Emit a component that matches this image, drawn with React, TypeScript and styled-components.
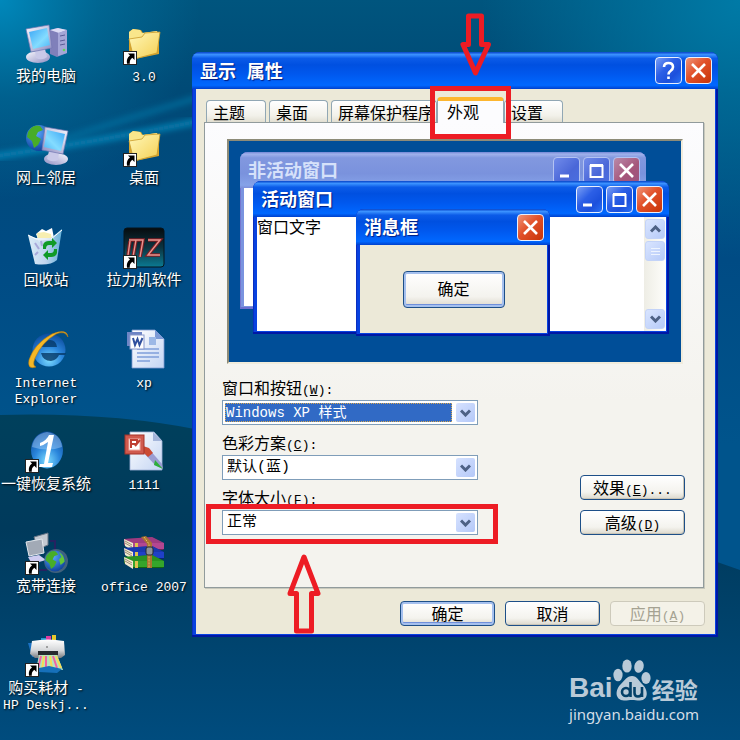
import React, { useState } from "react";
import styled, { createGlobalStyle, css } from "styled-components";

const cjk = `"Noto Sans CJK SC", sans-serif`;
const mono = `"Liberation Mono", "Noto Sans CJK SC", monospace`;

const GlobalStyle = createGlobalStyle`
  *, *::before, *::after { box-sizing: border-box; }
  body { margin: 0; background: #003f66; font-family: ${cjk}; font-size: 16px; }
  button, select { font: inherit; }
`;

/* ---------- Desktop ---------- */

const Desktop = styled.main`
  position: relative;
  min-height: 100vh;
  overflow: hidden;
  isolation: isolate;
`;

const Wallpaper = styled.svg`
  position: absolute;
  inset: 0;
  width: 100%;
  height: 100%;
  z-index: -1;
`;

const Palette = styled.svg`
  display: block;
  width: 0;
  height: 0;
`;

const IconGrid = styled.nav`
  display: grid;
  grid-template-columns: 92px 104px;
  grid-template-rows: repeat(7, 102px);
  grid-auto-flow: column;
  width: max-content;
  padding-top: 23px;
`;

const IconItem = styled.a`
  display: flex;
  flex-direction: column;
  align-items: center;
  gap: 2px;
  color: #fff;
  text-decoration: none;
  font-size: 15px;
  line-height: 16px;
  text-align: center;
  white-space: nowrap;
  text-shadow: 1px 1px 2px #000;
`;

const Glyph = styled.svg`
  width: 42px;
  height: 42px;
  flex: none;
  overflow: visible;
`;

const Latin = styled.span`
  font-family: ${mono};
  font-size: 13px;
  line-height: 0;
`;

/* ---------- Windows ---------- */

type Tone = "active" | "inactive";

const Frame = styled.section<{ $tone?: Tone }>`
  display: flex;
  flex-direction: column;
  border-radius: 8px 8px 0 0;
  background: ${(p) => (p.$tone === "inactive" ? "#7a93df" : "#0842e0")};
  padding: 0 3px 3px 4px;
  box-shadow: inset -2px -2px 0 ${(p) => (p.$tone === "inactive" ? "#6a6fd0" : "#0018a4")},
    inset 1px 0 0 ${(p) => (p.$tone === "inactive" ? "#7376cf" : "#0a2fc0")};
`;

const TitleBar = styled.header<{ $tone?: Tone }>`
  display: flex;
  align-items: center;
  gap: 3px;
  flex: none;
  height: 36px;
  margin: 0 -3px 0 -4px;
  padding: 0 6px 0 8px;
  border-radius: 8px 8px 0 0;
  background: ${(p) =>
    p.$tone === "inactive"
      ? "linear-gradient(#7386d6 0, #a0b2ec 6%, #8298df 16%, #7a92dd 60%, #85a2e8 92%, #7c8fda 100%)"
      : "linear-gradient(#0743c8 0, #3b92ff 7%, #0b5be8 17%, #0050e0 35%, #0058ee 60%, #0068ff 90%, #0040cc 100%)"};
`;

const Title = styled.h2`
  flex: 1;
  margin: 0;
  padding-top: 4px;
  font-family: ${mono};
  font-size: 18px;
  line-height: 24px;
  font-weight: 700;
  white-space: nowrap;
`;

const ActiveTitle = styled(Title)`
  color: #fff;
  text-shadow: 1px 1px 1px #001c80;
`;

const InactiveTitle = styled(Title)`
  color: #d6e1fa;
`;

const CaptionButton = styled.button<{ $kind: "blue" | "red"; $dim?: boolean }>`
  display: grid;
  place-items: center;
  width: 27px;
  height: 27px;
  padding: 0;
  border: 1px solid ${(p) => (p.$dim ? "#b4c3f2" : "#e8effd")};
  border-radius: 4px;
  color: #fff;
  background: ${(p) =>
    p.$kind === "red"
      ? p.$dim
        ? "linear-gradient(135deg, #b98aa8, #a5557a 60%, #9a5580)"
        : "linear-gradient(135deg, #f09478, #e1512a 45%, #c83408)"
      : p.$dim
      ? "linear-gradient(135deg, #718bea, #4a67d8 60%, #4a6ee0)"
      : "linear-gradient(135deg, #7a9ff5, #2c5fe6 40%, #1c50dc 70%, #2870f4)"};
`;

const Mark = styled.svg`
  width: 25px;
  height: 25px;
  fill: none;
  stroke: currentColor;
`;

const DialogWindow = styled(Frame)`
  position: absolute;
  left: 192px;
  right: 22px;
  top: 52px;
`;

const DialogTitleBar = styled(TitleBar)`
  height: 37px;
`;

const DialogBody = styled.div`
  display: flex;
  flex-direction: column;
  background: #ece9d8;
  padding: 8px 11px 8px 8px;
`;

/* ---------- Tabs ---------- */

const TabList = styled.div`
  display: flex;
  align-items: flex-end;
  height: 25px;
  margin-left: 2px;
`;

const Tab = styled.button<{ $width: number; $spaced?: boolean; $active?: boolean }>`
  position: relative;
  flex: none;
  width: ${(p) => p.$width}px;
  height: 22px;
  margin-right: ${(p) => (p.$spaced ? 3 : 0)}px;
  padding: 0 0 0 6px;
  border: 1px solid #91a7b4;
  border-bottom: 0;
  border-radius: 4px 4px 0 0;
  background: linear-gradient(#fff, #f2f1ea 70%, #e2dfd2);
  color: #000;
  line-height: 20px;
  text-align: left;
  white-space: nowrap;
  ${(p) =>
    p.$active &&
    css`
      z-index: 1;
      height: 26px;
      margin-bottom: -1px;
      padding: 0 0 4px 9px;
      border-top: 4px solid #fdb62f;
      background: #fcfcfe;
    `}
`;

const Panel = styled.div`
  display: flex;
  flex-direction: column;
  gap: 14px;
  padding: 16px 18px 52px 17px;
  border: 1px solid #919b9c;
  box-shadow: 1px 1px 0 #c8c8bc;
  background: linear-gradient(#fcfcfe, #f4f3ee 60%);
`;

/* ---------- Preview ---------- */

const Preview = styled.div`
  position: relative;
  height: 225px;
  margin: 0 2px 0 5px;
  border: 2px solid;
  border-color: #8d8b78 #f1ecdc #f1ecdc #8d8b78;
  background: #004e98;
`;

const InactiveSample = styled(Frame)`
  position: absolute;
  inset: 11px 35px 53px 11px;
`;

const ActiveSample = styled(Frame)`
  position: absolute;
  inset: 40px 12px 28px 24px;
`;

const MessageSample = styled(Frame)`
  position: absolute;
  left: 127px;
  right: 131px;
  top: 68px;
  bottom: 26px;
`;

const Page = styled.div`
  display: flex;
  flex: 1;
  background: #fff;
`;

const PageText = styled.p`
  flex: 1;
  margin: 0;
  line-height: 18px;
`;

const MessageBody = styled.div`
  flex: 1;
  display: grid;
  place-items: center;
  background: #ece9d8;
`;

const ScrollTrack = styled.div`
  display: flex;
  flex-direction: column;
  gap: 2px;
  width: 22px;
  padding: 2px 1px;
  background: linear-gradient(90deg, #eeede5, #fefefb);
`;

const ScrollPiece = styled.button<{ $last?: boolean }>`
  display: grid;
  place-items: center;
  height: 20px;
  margin-top: ${(p) => (p.$last ? "auto" : 0)};
  padding: 0;
  border: 1px solid #c3d3f8;
  border-radius: 3px;
  background: linear-gradient(135deg, #d9e5ff, #b6caf8);
  color: #4d6185;
`;

/* ---------- Form ---------- */

const FormArea = styled.form`
  display: flex;
  justify-content: space-between;
  align-items: flex-end;
`;

const Fields = styled.div`
  display: flex;
  flex-direction: column;
  gap: 8px;
  flex: 0 1 256px;
`;

const Field = styled.div`
  display: flex;
  flex-direction: column;
  gap: 4px;
`;

const FieldLabel = styled.label`
  line-height: 18px;
  white-space: nowrap;
`;

const SelectBox = styled.div`
  position: relative;
  height: 25px;
  padding: 2px;
  border: 1px solid #7f9db9;
  background: #fff;
`;

const Select = styled.select<{ $selected?: boolean }>`
  appearance: none;
  display: block;
  width: 100%;
  height: 100%;
  padding: 0 24px 0 2px;
  border: 0;
  outline: 0;
  background: transparent;
  color: #000;
  font-family: ${mono};
  font-size: 15px;
  line-height: 18px;
  ${(p) =>
    p.$selected &&
    css`
      width: calc(100% - 23px);
      padding: 0;
      border: 1px dotted #d8a850;
      background: #316ac5;
      color: #fff;
      font-size: 14px;
    `}
`;

const DropArrow = styled.span`
  position: absolute;
  top: 2px;
  right: 2px;
  bottom: 2px;
  display: grid;
  place-items: center;
  width: 19px;
  border-radius: 2px;
  background: linear-gradient(135deg, #d6e2ff, #b4c8f8);
  color: #4d6185;
  pointer-events: none;
`;

const SideButtons = styled.div`
  display: flex;
  flex-direction: column;
  gap: 10px;
  width: 105px;
`;

const PushButton = styled.button<{ $default?: boolean }>`
  height: 25px;
  padding: 0 0 2px;
  border: 1px solid #1d4f88;
  border-radius: 4px;
  background: linear-gradient(#fff, #f4f3ee 70%, #dcd8cc);
  box-shadow: ${(p) => (p.$default ? "inset 0 0 0 2px #a5c0ee, inset 0 -2px 0 1px #6f8fdb" : "inset -1px -1px 0 #c9c5b8")};
  color: #000;
  line-height: 20px;
  white-space: nowrap;
  &:disabled {
    border-color: #cdcabb;
    background: #f4f2e8;
    box-shadow: none;
    color: #a5a292;
  }
`;

const SampleButton = styled(PushButton)`
  width: 102px;
  height: 37px;
`;

const Footer = styled.footer`
  display: grid;
  grid-template-columns: repeat(3, 95px);
  justify-content: end;
  gap: 10px;
  margin: 13px -1px 0 0;
`;

/* ---------- Annotations ---------- */

const Callout = styled.div`
  position: absolute;
  z-index: 3;
  border: 5px solid #ed1c24;
  pointer-events: none;
`;

const TabCallout = styled(Callout)`
  left: 430px;
  top: 86px;
  width: 81px;
  height: 53px;
`;

const FieldCallout = styled(Callout)`
  left: 206px;
  top: 504px;
  width: 292px;
  height: 40px;
`;

const Arrow = styled.svg`
  position: absolute;
  z-index: 3;
  fill: none;
  stroke: #ed1c24;
  stroke-width: 5;
  stroke-linejoin: round;
  pointer-events: none;
`;

const DownArrow = styled(Arrow)`
  left: 459px;
  top: 12px;
  width: 34px;
  height: 66px;
`;

const UpArrow = styled(Arrow)`
  left: 286px;
  top: 552px;
  width: 36px;
  height: 84px;
`;

/* ---------- Watermark ---------- */

const Watermark = styled.aside`
  position: absolute;
  right: 41px;
  bottom: 16px;
  display: flex;
  flex-direction: column;
  color: #b9cad8;
`;

const Brand = styled.div`
  display: flex;
  align-items: flex-end;
  height: 45px;
`;

const BrandLatin = styled.span`
  font: 700 28px/32px "Liberation Sans", sans-serif;
`;

const BrandCjk = styled.span`
  font: 700 23px/30px ${cjk};
`;

const Paw = styled.svg`
  width: 38px;
  height: 42px;
  margin: 0 1px 3px 0;
`;

const SiteLink = styled.a`
  color: #d3dee7;
  text-decoration: none;
  font: 15px/20px "Noto Sans", sans-serif;
`;

/* ---------- Drawings ---------- */

const Shortcut = () => (
  <g>
    <rect x=".5" y="28.5" width="13" height="13" fill="#fff" stroke="#222" />
    <path d="M5 30.500h6.500v6.500l-2.200-2.200q-3 2-2.500 6h-2.800q-1-5.500 3-8.200z" fill="#000" />
  </g>
);

const Defs = () => (
  <Palette aria-hidden="true">
    <defs>
      <linearGradient id="screen" x1="0" y1="0" x2="1" y2="1">
        <stop offset="0" stopColor="#3aa5f5" />
        <stop offset=".6" stopColor="#84dcff" />
        <stop offset="1" stopColor="#4cb4f6" />
      </linearGradient>
      <linearGradient id="shell" x1="0" y1="0" x2="1" y2="1">
        <stop offset="0" stopColor="#fafaff" />
        <stop offset="1" stopColor="#8d8dc2" />
      </linearGradient>
      <linearGradient id="folder" x1="0" y1="0" x2="1" y2="1">
        <stop offset="0" stopColor="#fff8ba" />
        <stop offset="1" stopColor="#f4cf52" />
      </linearGradient>
      <radialGradient id="ocean" cx=".4" cy=".3" r=".8">
        <stop offset="0" stopColor="#5aa7ff" />
        <stop offset="1" stopColor="#05378f" />
      </radialGradient>
      <radialGradient id="orb" cx=".5" cy=".8" r=".8">
        <stop offset="0" stopColor="#7cdcff" />
        <stop offset=".5" stopColor="#2a86dc" />
        <stop offset="1" stopColor="#0c4b9c" />
      </radialGradient>
      <linearGradient id="paper" x1="0" y1="0" x2="1" y2="1">
        <stop offset="0" stopColor="#fff" />
        <stop offset="1" stopColor="#c4d5f3" />
      </linearGradient>
      <linearGradient id="teal" x1="0" y1="0" x2="0" y2="1">
        <stop offset="0" stopColor="#060b0e" />
        <stop offset=".5" stopColor="#0c3440" />
        <stop offset="1" stopColor="#0b7a92" />
      </linearGradient>
      <linearGradient id="bin" x1="0" y1="0" x2="1" y2="0">
        <stop offset="0" stopColor="#e8f7ff" />
        <stop offset=".5" stopColor="#d0def5" />
        <stop offset="1" stopColor="#69b6dd" />
      </linearGradient>
      <linearGradient id="metal" x1="0" y1="0" x2="0" y2="1">
        <stop offset="0" stopColor="#fff" />
        <stop offset=".6" stopColor="#d4d6d8" />
        <stop offset="1" stopColor="#777b80" />
      </linearGradient>
    </defs>
  </Palette>
);

const Monitor = () => (
  <g>
    <ellipse cx="12" cy="33" rx="12" ry="6" fill="url(#shell)" />
    <path d="M9 26l10-1 2 8q-5 4-11 1z" fill="#c9c9e8" />
    <path d="M0 5L23 1l3 23L5 28z" fill="url(#shell)" stroke="#7376b1" strokeWidth=".7" />
    <path d="M3 8L21 4l3 17-17 4z" fill="url(#screen)" />
  </g>
);

const Globe = () => (
  <g>
    <circle r="13" fill="url(#ocean)" />
    <path d="M-11-6q5-8 12-6l3 4-5 2-2 4 5 3-3 6-4 3-2-7-5-4z" fill="#48ad28" />
    <path d="M5-11q7 4 7 12l-5 4-2-7 3-3z" fill="#63c637" />
  </g>
);

const ComputerIcon = () => (
  <>
    <path d="M25 7l7-2 10 2v23l-10 4-7-3z" fill="#8080ba" />
    <path d="M25 7l8-2 9 2-8 3z" fill="#dcdcf5" />
    <path d="M33 10l9-3v23l-9 3z" fill="#a5a6d7" />
    <path d="M35 13l5-1M35 18l5-1M35 22l5-1" stroke="#5b5c96" />
    <circle cx="39" cy="27" r="1.300" fill="#5fd45a" />
    <g transform="translate(1 1)"><Monitor /></g>
  </>
);

const NetworkIcon = () => (
  <>
    <g transform="translate(14 13)"><Globe /></g>
    <g transform="translate(43 1) scale(-1 1)"><Monitor /></g>
  </>
);

const FolderIcon = () => (
  <>
    <path d="M6 9l4-3 8 1 2 3 14-2 2 3v20L12 36l-6-3z" fill="#d9a52c" />
    <path d="M6 9l4-3 7 1 2 3 15-2v6L6 17z" fill="#f9e68b" />
    <path d="M6 16l13-2 3-4 15-1-3 21-23 6z" fill="url(#folder)" stroke="#c99b2b" strokeWidth=".8" />
    <Shortcut />
  </>
);

const RecycleIcon = () => (
  <>
    <path d="M11 7l6-5 4 2 6-3 2 10-15 4z" fill="#fff" />
    <path d="M12 6l7-1 7 2 1 6-14 1z" fill="#f7eeb1" />
    <path d="M3 8l8 3 15 0 11-9-5 31q-7 6-22 4z" fill="url(#bin)" fillOpacity=".94" />
    <path d="M3 8l8 4 15 0 11-9" fill="none" stroke="#fff" />
    <path d="M10 16l4 6M10 28l3-3M16 14l1 5" stroke="#a9a9da" strokeWidth="2" fill="none" />
    <path d="M18 22v-4q1-4 6-4h3v-3l5 5-5 5v-3h-3q-3 0-3 4z" fill="#109a26" />
    <path d="M32 22v4q-1 4-6 4h-3v3l-5-5 5-5v3h3q3 0 3-4z" fill="#109a26" />
  </>
);

const ExplorerIcon = () => (
  <>
    <circle cx="24" cy="21" r="16.500" fill="url(#orb)" />
    <path d="M16 18q2-7 9-7 6 0 7 7zM16 24q2 8 10 8 6-1 8-6h6l1-2z" fill="#053866" fillOpacity=".8" />
    <path d="M43 8Q42-1 27 5 9 15 4 31q-2 10 7 7-4-1-1-9Q17 13 31 5q9-4 12 3z" fill="#f4b826" stroke="#bd7b09" strokeWidth=".6" />
  </>
);

const OneKeyIcon = () => (
  <>
    <ellipse cx="22" cy="19" rx="16" ry="18.500" fill="url(#orb)" />
    <path d="M7 16q2-13 15-15 14 2 15 15-14 5-30 0z" fill="#b8dcff" fillOpacity=".4" />
    <path d="M15 12q7-3 9-8h5l-6 28h5l-1 4H14l1-3h4l4-22q-4 3-8 4z" fill="#fff" />
    <Shortcut />
  </>
);

const BroadbandIcon = () => (
  <>
    <path d="M9 4l14-4v12l-10 4z" fill="#c5cad2" stroke="#697687" />
    <path d="M1 9l16-3 2 14-15 3z" fill="#a2aab6" stroke="#e2e7ed" />
    <path d="M3 24l11-2 7 5-14 4z" fill="#cfccf1" />
    <path d="M25 8h5v14M14 37h8" fill="none" stroke="#262261" strokeWidth="2" />
    <circle cx="31" cy="28" r="12" fill="#6d7a8e" fillOpacity=".6" />
    <g transform="translate(30 28) scale(.8)"><Globe /></g>
    <Shortcut />
  </>
);

const PrinterIcon = () => (
  <>
    <path d="M3 8h10v29h18V22H7z" fill="#1b72c3" />
    <path d="M16 3h5v6h-5z" fill="#249bcd" /><path d="M21 1h5v8h-5z" fill="#de3ca0" /><path d="M27 0h4v9h-4z" fill="#e7c82b" />
    <path d="M7 6q16-3 32 0l1 14-4 3H10l-5-4z" fill="url(#metal)" />
    <path d="M13 16h20v4H13z" fill="#26292d" />
    <path d="M14 20h18l6 15H11z" fill="#b5e2bb" />
    <path d="M16 21l-3 13M21 21v13M28 21l4 12" stroke="#f160a5" strokeWidth="2" />
    <path d="M19 21l-2 14M25 21l2 13M31 21l5 12" stroke="#f5dc55" strokeWidth="2" />
    <path d="M14 33l10-2 13 3-5 4-18-1z" fill="#1670ba" />
    <circle cx="22" cy="12" r="1" fill="#888" />
    <Shortcut />
  </>
);

const MzIcon = () => (
  <>
    <rect x="1" y="1" width="40" height="39" rx="3" fill="url(#teal)" stroke="#06151c" />
    <path d="M6 13h14l-3 17M13 13l-3 17M7 14L5 28M25 13h12L25 28h12" fill="none" stroke="#7d1d23" strokeWidth="3.500" />
    <path d="M6 13h14l-3 17M13 13l-3 17M7 14L5 28M25 13h12L25 28h12" fill="none" stroke="#e9958f" strokeWidth="1.400" />
    <Shortcut />
  </>
);

const WordIcon = () => (
  <>
    <path d="M9 1h23l9 9v29H9z" fill="url(#paper)" stroke="#7f9bd2" strokeWidth=".8" />
    <path d="M32 1v9h9z" fill="#7c9ad6" />
    <path d="M26 8h7v8h-7z" fill="#9cb8e6" />
    <path d="M14 20h22M14 24h22M14 28h22M14 32h13" stroke="#7f9fda" strokeWidth="1.300" />
    <path d="M4 3h15v14H4z" fill="#6e85c5" /><rect x="7" y="6" width="14" height="14" fill="#fff" stroke="#8797cb" />
    <path d="M10 9l2 7 2.500-6 2 6 3-7" fill="none" stroke="#30509e" strokeWidth="2" />
  </>
);

const PictureIcon = () => (
  <>
    <path d="M7 1h24l8 9v29H7z" fill="url(#paper)" stroke="#9fb1d7" strokeWidth=".8" />
    <path d="M30 1v9h9z" fill="#a4b5da" />
    <path d="M20 16l6 2 13 15 1 5-8-4-13-14z" fill="#9a9cd2" />
    <path d="M20 15l6 2 4 5-5 4-6-6z" fill="#cb4a33" /><path d="M32 29l8 9-9-4z" fill="#2daf3b" />
    <rect x="2" y="4" width="19" height="19" fill="#d05a4e" stroke="#a53229" />
    <rect x="6" y="8" width="11" height="11" fill="#fff" stroke="#f1aba4" />
    <path d="M8 17V9h6v4H9m3 2l5-6" fill="none" stroke="#bf4034" strokeWidth="2" />
  </>
);

const ArchiveIcon = () => (
  <>
    {[
      ["#b34791", "#6d245b", 5],
      ["#1f40c8", "#0b2675", 14],
      ["#35a52b", "#13640f", 23],
    ].map(([face, edge, y]) => (
      <g key={String(face)} transform={`translate(0 ${y})`}>
        <path d="M1 1l28-2 12 6v6l-1 1H10L1 7z" fill={edge as string} />
        <path d="M1 1l28-2 12 6H10z" fill={face as string} fillOpacity=".7" />
        <path d="M1 1l9 4v8L2 8z" fill="#f2e9d0" />
        <path d="M2 3l7 4M2 5l7 4" stroke="#87765f" strokeWidth=".8" />
        <path d="M10 5h31v6H10z" fill={face as string} />
        <path d="M12 5h3v7h-3z" fill="#e0c14d" />
      </g>
    ))}
    <path d="M18 4l5-1 6 7v25h-5V11z" fill="#a87530" />
    <path d="M21 4l5 7v24" fill="none" stroke="#e7bf6c" strokeDasharray="2 1" />
    <rect x="23" y="14" width="7" height="8" rx="2" fill="#8e9298" stroke="#272b30" />
  </>
);

type MarkKind = "min" | "max" | "close" | "help";

const CaptionMark = ({ kind }: { kind: MarkKind }) => (
  <Mark viewBox="0 0 25 25" aria-hidden="true">
    {kind === "min" && <path d="M6 18h9" strokeWidth="3" />}
    {kind === "max" && <path d="M6 8h13M6.500 7v12h12V7" strokeWidth="2" />}
    {kind === "max" && <path d="M6 7.500h13" strokeWidth="3" />}
    {kind === "close" && <path d="M6 6l13 13M19 6L6 19" strokeWidth="2.600" />}
    {kind === "help" && <path d="M8 9q0-4 4.500-4T17 9q0 2-2.300 3.700-2.200 1.500-2.200 3.800M12.500 18.500v2.500" strokeWidth="2.600" />}
  </Mark>
);

const Chevron = ({ up }: { up?: boolean }) => (
  <svg width="11" height="8" viewBox="0 0 11 8" fill="none" stroke="currentColor" strokeWidth="3" aria-hidden="true">
    <path d={up ? "M1 6.500L5.500 2 10 6.500" : "M1 1.500L5.500 6 10 1.500"} />
  </svg>
);

const names: Record<MarkKind, string> = { min: "最小化", max: "最大化", close: "关闭", help: "帮助" };

const Captions = ({ kinds, dim }: { kinds: MarkKind[]; dim?: boolean }) => (
  <>
    {kinds.map((k) => (
      <CaptionButton key={k} type="button" aria-label={names[k]} $kind={k === "close" ? "red" : "blue"} $dim={dim}>
        <CaptionMark kind={k} />
      </CaptionButton>
    ))}
  </>
);

/* ---------- Data ---------- */

const icons: { art: React.ReactNode; label: React.ReactNode; key: string }[] = [
  { key: "computer", art: <ComputerIcon />, label: "我的电脑" },
  { key: "network", art: <NetworkIcon />, label: "网上邻居" },
  { key: "recycle", art: <RecycleIcon />, label: "回收站" },
  { key: "ie", art: <ExplorerIcon />, label: <Latin>Internet<br />Explorer</Latin> },
  { key: "onekey", art: <OneKeyIcon />, label: "一键恢复系统" },
  { key: "broadband", art: <BroadbandIcon />, label: "宽带连接" },
  { key: "printer", art: <PrinterIcon />, label: <>购买耗材<Latin> -<br />HP Deskj...</Latin></> },
  { key: "v3", art: <FolderIcon />, label: <Latin>3.0</Latin> },
  { key: "desk", art: <FolderIcon />, label: "桌面" },
  { key: "mz", art: <MzIcon />, label: "拉力机软件" },
  { key: "xp", art: <WordIcon />, label: <Latin>xp</Latin> },
  { key: "1111", art: <PictureIcon />, label: <Latin>1111</Latin> },
  { key: "office", art: <ArchiveIcon />, label: <Latin>office 2007</Latin> },
];

const tabs = [
  { label: "主题", width: 60, spaced: true },
  { label: "桌面", width: 59, spaced: true },
  { label: "屏幕保护程序", width: 106 },
  { label: "外观", width: 67 },
  { label: "设置", width: 59 },
];

const fields = [
  { id: "style", label: "窗口和按钮", key: "W", value: "Windows XP 样式", selected: true },
  { id: "scheme", label: "色彩方案", key: "C", value: "默认(蓝)" },
  { id: "size", label: "字体大小", key: "F", value: "正常" },
];

export default function App() {
  const [tab, setTab] = useState("外观");
  return (
    <Desktop>
      <GlobalStyle />
      <Wallpaper viewBox="0 0 740 740" preserveAspectRatio="none" aria-hidden="true">
        <defs>
          <linearGradient id="sky" x1="0" y1="0" x2="0" y2="1">
            <stop offset="0" stopColor="#00557e" />
            <stop offset=".12" stopColor="#004a76" />
            <stop offset=".35" stopColor="#004b84" />
            <stop offset=".6" stopColor="#00548c" />
          </linearGradient>
          <radialGradient id="glowLeft" cx="0" cy="0" r=".27">
            <stop offset="0" stopColor="#0088bb" />
            <stop offset=".5" stopColor="#0080b0" stopOpacity=".4" />
            <stop offset="1" stopColor="#0080b0" stopOpacity="0" />
          </radialGradient>
          <radialGradient id="glowRight" cx="1" cy="0" r=".35">
            <stop offset="0" stopColor="#007aa6" />
            <stop offset="1" stopColor="#007aa6" stopOpacity="0" />
          </radialGradient>
          <linearGradient id="hill" x1="0" y1="0" x2="0" y2="1">
            <stop offset="0" stopColor="#00405c" />
            <stop offset=".35" stopColor="#003a5c" />
            <stop offset="1" stopColor="#004c7e" />
          </linearGradient>
          <filter id="soft"><feGaussianBlur stdDeviation="3" /></filter>
        </defs>
        <rect width="740" height="740" fill="url(#sky)" />
        <rect width="740" height="740" fill="url(#glowLeft)" />
        <rect width="740" height="740" fill="url(#glowRight)" />
        <path d="M-10 157Q90 143 200 121" fill="none" stroke="#0a8cc0" strokeWidth="5" filter="url(#soft)" />
        <path d="M60 140L130 118 200 97" fill="none" stroke="#0672a2" strokeWidth="4" filter="url(#soft)" />
        <path d="M0 415Q110 412 200 430 460 470 640 535L740 570V740H0z" fill="url(#hill)" />
      </Wallpaper>
      <Defs />
      <IconGrid aria-label="桌面">
        {icons.map((i) => (
          <IconItem href="#" key={i.key}>
            <Glyph viewBox="0 0 42 42" aria-hidden="true">{i.art}</Glyph>
            <span>{i.label}</span>
          </IconItem>
        ))}
      </IconGrid>

      <DialogWindow>
        <DialogTitleBar>
          <ActiveTitle as="h1">显示 属性</ActiveTitle>
          <Captions kinds={["help", "close"]} />
        </DialogTitleBar>
        <DialogBody>
          <TabList role="tablist">
            {tabs.map((t) => (
              <Tab
                key={t.label}
                type="button"
                role="tab"
                aria-selected={tab === t.label}
                $width={t.width}
                $spaced={t.spaced}
                $active={tab === t.label}
                onClick={() => setTab(t.label)}
              >
                {t.label}
              </Tab>
            ))}
          </TabList>
          <Panel role="tabpanel">
            <Preview>
              <InactiveSample $tone="inactive">
                <TitleBar $tone="inactive">
                  <InactiveTitle>非活动窗口</InactiveTitle>
                  <Captions kinds={["min", "max", "close"]} dim />
                </TitleBar>
                <Page />
              </InactiveSample>
              <ActiveSample>
                <TitleBar>
                  <ActiveTitle>活动窗口</ActiveTitle>
                  <Captions kinds={["min", "max", "close"]} />
                </TitleBar>
                <Page>
                  <PageText>窗口文字</PageText>
                  <ScrollTrack>
                    <ScrollPiece type="button" aria-label="向上"><Chevron up /></ScrollPiece>
                    <ScrollPiece type="button" aria-label="滚动">
                      <svg width="9" height="9" viewBox="0 0 9 9" stroke="#eef4fe" aria-hidden="true">
                        <path d="M0 1.500h9M0 4.500h9M0 7.500h9" />
                      </svg>
                    </ScrollPiece>
                    <ScrollPiece type="button" aria-label="向下" $last><Chevron /></ScrollPiece>
                  </ScrollTrack>
                </Page>
              </ActiveSample>
              <MessageSample>
                <TitleBar>
                  <ActiveTitle>消息框</ActiveTitle>
                  <Captions kinds={["close"]} />
                </TitleBar>
                <MessageBody>
                  <SampleButton type="button" $default>确定</SampleButton>
                </MessageBody>
              </MessageSample>
            </Preview>
            <FormArea>
              <Fields>
                {fields.map((f) => (
                  <Field key={f.id}>
                    <FieldLabel htmlFor={f.id}>
                      {f.label}<Latin>(<u>{f.key}</u>):</Latin>
                    </FieldLabel>
                    <SelectBox>
                      <Select id={f.id} $selected={f.selected}>
                        <option>{f.value}</option>
                      </Select>
                      <DropArrow><Chevron /></DropArrow>
                    </SelectBox>
                  </Field>
                ))}
              </Fields>
              <SideButtons>
                <PushButton type="button">效果<Latin>(<u>E</u>)...</Latin></PushButton>
                <PushButton type="button">高级<Latin>(<u>D</u>)</Latin></PushButton>
              </SideButtons>
            </FormArea>
          </Panel>
          <Footer>
            <PushButton type="button" $default>确定</PushButton>
            <PushButton type="button">取消</PushButton>
            <PushButton type="button" disabled>应用<Latin>(<u>A</u>)</Latin></PushButton>
          </Footer>
        </DialogBody>
      </DialogWindow>

      <TabCallout />
      <FieldCallout />
      <DownArrow viewBox="459 12 34 66" aria-hidden="true">
        <path d="M468.500 16h13v28.500h7L475.500 73 463 44.500h5.500z" />
      </DownArrow>
      <UpArrow viewBox="286 552 36 84" aria-hidden="true">
        <path d="M304 557l14 36.500h-6.500V631h-15v-37.500H290z" />
      </UpArrow>

      <Watermark>
        <Brand>
          <BrandLatin>Bai</BrandLatin>
          <Paw viewBox="0 0 38 42" fill="currentColor" aria-label="du">
            <ellipse cx="5" cy="16" rx="4.600" ry="6.300" />
            <ellipse cx="14" cy="7" rx="4.700" ry="6.600" />
            <ellipse cx="26" cy="7.500" rx="4.700" ry="6.300" transform="rotate(12 26 7.500)" />
            <ellipse cx="33" cy="19" rx="4.600" ry="6" />
            <path d="M19 17c5 0 7 5 11 9 5 5 6 15-3 15.500-4 0-5-.5-8-.500s-4 .5-8 .5c-9-.5-9-10-4-15.500 4-4 7-9 12-9z" />
            <g fill="none" stroke="#044068" strokeWidth="2.600">
              <circle cx="13" cy="33" r="4" />
              <path d="M17.500 23v15M21.500 28v6q0 3.500 3.500 3.500t4-3.500v-6M29 28v10" />
            </g>
          </Paw>
          <BrandCjk>经验</BrandCjk>
        </Brand>
        <SiteLink href="#">jingyan.baidu.com</SiteLink>
      </Watermark>
    </Desktop>
  );
}
